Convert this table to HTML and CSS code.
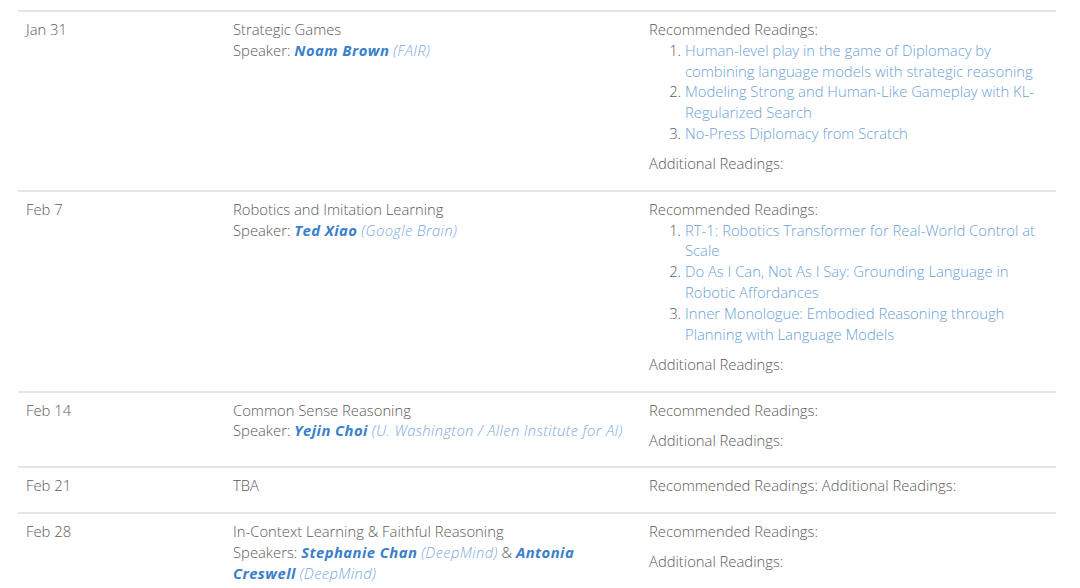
FILE: index.html
```html
<!DOCTYPE html>
<html>
<head>
<meta charset="utf-8">
<link rel="stylesheet" href="styles.css">
</head>
<body>
<table class="schedule">
  <colgroup><col class="c-date"><col class="c-topic"><col class="c-read"></colgroup>
  <tr>
    <td>Jan 31</td>
    <td>Strategic Games<br>Speaker: <a class="who">Noam Brown</a> <span class="aff">(FAIR)</span></td>
    <td>
      <div>Recommended Readings:</div>
      <ol>
        <li><a>Human-level play in the game of Diplomacy by combining language models with strategic reasoning</a></li>
        <li><a>Modeling Strong and Human-Like Gameplay with KL-Regularized Search</a></li>
        <li><a>No-Press Diplomacy from Scratch</a></li>
      </ol>
      <div>Additional Readings:</div>
    </td>
  </tr>
  <tr>
    <td>Feb 7</td>
    <td>Robotics and Imitation Learning<br>Speaker: <a class="who">Ted Xiao</a> <span class="aff">(Google Brain)</span></td>
    <td>
      <div>Recommended Readings:</div>
      <ol>
        <li><a>RT-1: Robotics Transformer for Real-World Control at Scale</a></li>
        <li><a>Do As I Can, Not As I Say: Grounding Language in Robotic Affordances</a></li>
        <li><a>Inner Monologue: Embodied Reasoning through Planning with Language Models</a></li>
      </ol>
      <div>Additional Readings:</div>
    </td>
  </tr>
  <tr>
    <td>Feb 14</td>
    <td>Common Sense Reasoning<br>Speaker: <a class="who">Yejin Choi</a> <span class="aff">(U. Washington / Allen Institute for AI)</span></td>
    <td>
      <div class="gap">Recommended Readings:</div>
      <div>Additional Readings:</div>
    </td>
  </tr>
  <tr>
    <td>Feb 21</td>
    <td>TBA</td>
    <td>Recommended Readings: Additional Readings:</td>
  </tr>
  <tr>
    <td>Feb 28</td>
    <td>In-Context Learning &amp; Faithful Reasoning<br>Speakers: <a class="who">Stephanie Chan</a> <span class="aff">(DeepMind)</span> &amp; <a class="who">Antonia Creswell</a> <span class="aff">(DeepMind)</span></td>
    <td>
      <div class="gap">Recommended Readings:</div>
      <div>Additional Readings:</div>
    </td>
  </tr>
</table>
</body>
</html>
```
FILE: styles.css
```css
body {
  margin: 0;
  padding: 10px 24px 0 18px;
  background: #fff;
  font-family: "Open Sans", "Liberation Sans", sans-serif;
  font-weight: 300;
  font-size: 14.8px;
  line-height: 20.8px;
  color: #5a5a5a;
}
.schedule {
  width: 1038px;
  border-collapse: collapse;
  table-layout: fixed;
}
.c-date { width: 207px; }
.c-topic { width: 416px; }
.c-read { width: 415px; }
.schedule td {
  vertical-align: top;
  border-top: 2px solid #e6e6e6;
  padding: 7px 8px 16px 8px;
}
a {
  color: #6a9fd8;
  text-decoration: none;
}
.who {
  color: #3a7fcb;
  font-weight: 700;
  font-style: italic;
  letter-spacing: 0.45px;
}
.aff {
  color: #7aa9de;
  font-style: italic;
  letter-spacing: 0.35px;
}
ol {
  margin: 0 0 9.3px 0;
  padding-left: 36px;
}
.gap { margin-bottom: 9.3px; }
```
